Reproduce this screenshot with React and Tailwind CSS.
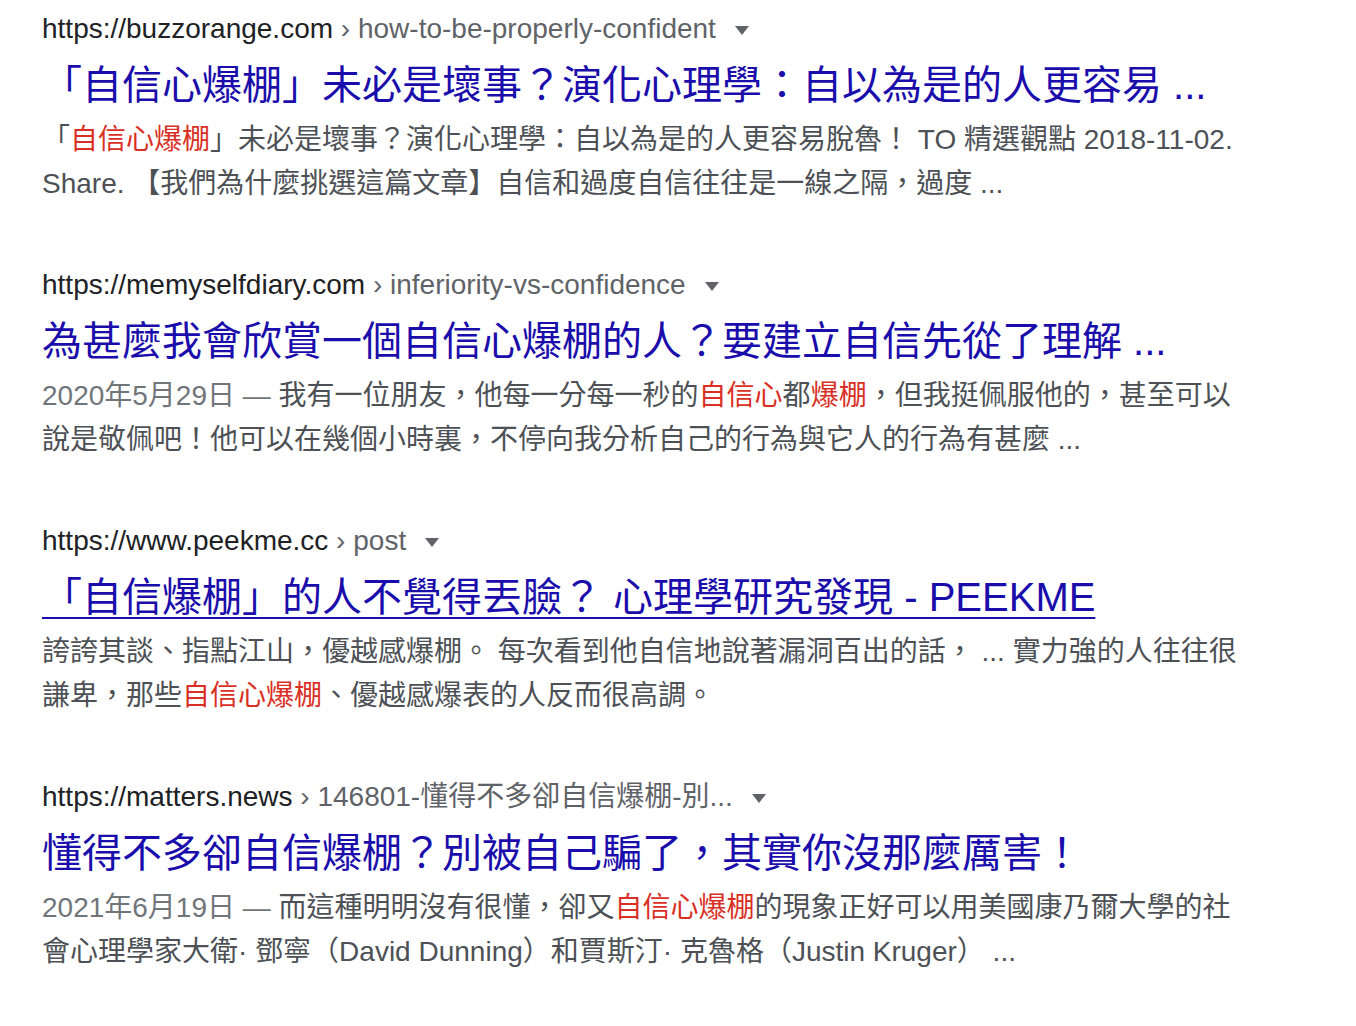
import React from "react";

const font = {
  fontFamily: '"Liberation Sans", Arial, "Noto Sans CJK TC", sans-serif',
};

// keyword in the snippet is shown in red
const Em = ({ children }) => <span className="text-[#d93025]">{children}</span>;
const Date = ({ children }) => <span className="text-[#70757a]">{children}</span>;

const Caret = () => (
  <svg width="14" height="9" viewBox="0 0 14 9" className="ml-[19px] mt-[2px]">
    <path d="M0 0 L14 0 L7 9 Z" fill="#5f6368" />
  </svg>
);

const results = [
  {
    domain: "https://buzzorange.com",
    path: "how-to-be-properly-confident",
    title: "「自信心爆棚」未必是壞事？演化心理學：自以為是的人更容易 ...",
    lines: [
      <>
        「<Em>自信心爆棚</Em>」未必是壞事？演化心理學：自以為是的人更容易脫魯！ TO 精選觀點 2018-11-02.
      </>,
      <>Share. 【我們為什麼挑選這篇文章】自信和過度自信往往是一線之隔，過度 ...</>,
    ],
  },
  {
    domain: "https://memyselfdiary.com",
    path: "inferiority-vs-confidence",
    title: "為甚麼我會欣賞一個自信心爆棚的人？要建立自信先從了理解 ...",
    lines: [
      <>
        <Date>2020年5月29日 — </Date>我有一位朋友，他每一分每一秒的<Em>自信心</Em>都<Em>爆棚</Em>，但我挺佩服他的，甚至可以
      </>,
      <>說是敬佩吧！他可以在幾個小時裏，不停向我分析自己的行為與它人的行為有甚麼 ...</>,
    ],
  },
  {
    domain: "https://www.peekme.cc",
    path: "post",
    title: "「自信爆棚」的人不覺得丟臉？ 心理學研究發現 - PEEKME",
    underline: true,
    lines: [
      <>誇誇其談、指點江山，優越感爆棚。 每次看到他自信地說著漏洞百出的話， ... 實力強的人往往很</>,
      <>
        謙卑，那些<Em>自信心爆棚</Em>、優越感爆表的人反而很高調。
      </>,
    ],
  },
  {
    domain: "https://matters.news",
    path: "146801-懂得不多卻自信爆棚-別...",
    title: "懂得不多卻自信爆棚？別被自己騙了，其實你沒那麼厲害！",
    lines: [
      <>
        <Date>2021年6月19日 — </Date>而這種明明沒有很懂，卻又<Em>自信心爆棚</Em>的現象正好可以用美國康乃爾大學的社
      </>,
      <>會心理學家大衛· 鄧寧（David Dunning）和賈斯汀· 克魯格（Justin Kruger） ...</>,
    ],
  },
];

export default function App() {
  return (
    <div className="min-h-screen w-[1356px] bg-white pl-[42px] pt-[9px]" style={font}>
      {results.map((r, i) => (
        <div key={i} className="mb-[59px] w-[1260px]">
          <div className="flex h-[40px] items-center text-[28px] leading-[40px]">
            <span className="text-[#202124]">{r.domain}</span>
            <span className="whitespace-pre text-[#5f6368]"> › {r.path}</span>
            <Caret />
          </div>
          <div
            className={
              "mt-[8px] h-[56px] whitespace-nowrap text-[40px] leading-[56px] text-[#1a0dab] " +
              (r.underline ? "underline decoration-[2px] underline-offset-[6px]" : "")
            }
          >
            {r.title}
          </div>
          <div className="mt-[5px] text-[28px] leading-[44px] text-[#4d5156]">
            {r.lines.map((l, j) => (
              <div key={j} className="whitespace-nowrap">
                {l}
              </div>
            ))}
          </div>
        </div>
      ))}
    </div>
  );
}
